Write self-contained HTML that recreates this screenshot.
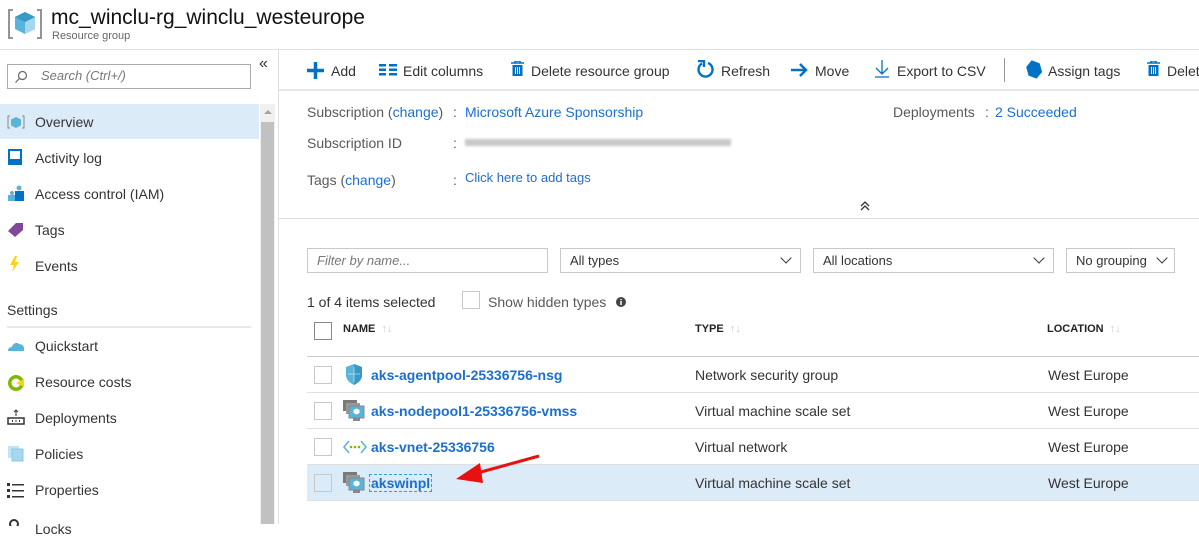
<!DOCTYPE html>
<html><head><meta charset="utf-8"><style>
*{margin:0;padding:0;box-sizing:border-box}
body{width:1199px;height:524px;overflow:hidden;background:#fff;font-family:"Liberation Sans",sans-serif;color:#333;position:relative;font-size:14px}
.a{position:absolute;white-space:nowrap}
.lnk{color:#1a6fd1}
.g{color:#595959}
.nav{position:absolute;left:35px;font-size:14px;color:#333}
.ic{position:absolute}
.tb{position:absolute;top:63px;font-size:14px;color:#333}
.sel{position:absolute;height:25px;border:1px solid #c8c8c8;font-size:13px;padding:4px 9px;color:#333}
.chev{position:absolute;right:10px;top:5px;width:8px;height:8px;border-right:1.5px solid #333;border-bottom:1.5px solid #333;transform:rotate(45deg)}
.cb{position:absolute;width:18px;height:18px;border:1px solid #c8c8c8;background:#fff}
.hl{position:absolute;height:1px;background:#e0e0e0}
.rn{position:absolute;left:371px;font-size:14px;font-weight:bold;color:#1a6fd1}
.rt{position:absolute;left:695px;font-size:14px}
.rl{position:absolute;left:1048px;font-size:14px}
</style></head><body>
<svg class="ic" style="left:7px;top:8px" width="36" height="32" viewBox="0 0 36 32"><path d="M6 2H2v28h4M30 2h4v28h-4" fill="none" stroke="#888" stroke-width="1.8"/><path d="M18 4l10 5v12l-10 5-10-5V9z" fill="#59b4d9"/><path d="M18 14l10-5v12l-10 5z" fill="#a5d8ef"/><path d="M8 9l10-5 10 5-10 5z" fill="#3999c6"/></svg>
<div class="a" style="left:51px;top:6px;font-size:21px;color:#111">mc_winclu-rg_winclu_westeurope</div>
<div class="a" style="left:52px;top:30px;font-size:11px;color:#666">Resource group</div>
<div class="hl" style="left:0;top:49px;width:1199px;background:#e0e0e0"></div>
<div class="a" style="left:7px;top:64px;width:244px;height:25px;border:1px solid #aaa"></div>
<svg class="ic" style="left:14px;top:70px" width="14" height="14"><circle cx="8.5" cy="5.5" r="4" fill="none" stroke="#666" stroke-width="1.2"/><path d="M5.5 8.5L1.5 12.5" stroke="#666" stroke-width="1.2"/></svg>
<div class="a" style="left:41px;top:68px;font-size:13px;font-style:italic;color:#777">Search (Ctrl+/)</div>
<div class="a" style="left:259px;top:55px;font-size:16px;color:#333">«</div>
<div class="a" style="left:0;top:104px;width:259px;height:35px;background:#dcebf8"></div>
<div class="a" style="left:260px;top:104px;width:15px;height:420px;background:#f0f0f0"></div>
<div class="a" style="left:261px;top:122px;width:13px;height:402px;background:#c1c1c1"></div>
<div class="a" style="left:264px;top:110px;width:0;height:0;border-left:4px solid transparent;border-right:4px solid transparent;border-bottom:4px solid #a3a3a3"></div>
<div class="a" style="left:278px;top:50px;width:1px;height:474px;background:#e0e0e0"></div>
<svg class="ic" style="left:7px;top:114px" width="18" height="16"><path d="M3 2H1v12h2M15 2h2v12h-2" fill="none" stroke="#888"/><path d="M9 3l5 2.5v6L9 14 4 11.5v-6z" fill="#59b4d9"/></svg>
<div class="nav" style="top:114px">Overview</div>
<svg class="ic" style="left:8px;top:149px" width="14" height="16"><rect x="0" y="0" width="14" height="16" fill="#0072c6"/><rect x="2" y="2" width="10" height="8" fill="#fff"/></svg>
<div class="nav" style="top:150px">Activity log</div>
<svg class="ic" style="left:7px;top:185px" width="18" height="16"><circle cx="12" cy="3" r="2.5" fill="#59b4d9"/><rect x="8" y="6" width="9" height="10" fill="#0072c6"/><circle cx="5" cy="8" r="2" fill="#59b4d9"/><rect x="1" y="10" width="7" height="6" fill="#59b4d9"/></svg>
<div class="nav" style="top:186px">Access control (IAM)</div>
<svg class="ic" style="left:7px;top:221px" width="18" height="16"><path d="M1 10L9 2h7v7l-8 7z" fill="#804998"/></svg>
<div class="nav" style="top:222px">Tags</div>
<svg class="ic" style="left:9px;top:256px" width="12" height="16"><path d="M6 0L1 9h4l-2 7 7-10H6l2-6z" fill="#fcd116"/></svg>
<div class="nav" style="top:258px">Events</div>
<div class="a" style="left:7px;top:302px;font-size:14px;color:#333">Settings</div>
<div class="a" style="left:7px;top:326px;width:244px;height:2px;background:#e8e8e8"></div>
<svg class="ic" style="left:7px;top:340px" width="18" height="12"><path d="M1 11c0-3 2-4 4-4 1-4 5-5 7-3 3 0 5 2 5 4v3z" fill="#59b4d9"/></svg>
<div class="nav" style="top:338px">Quickstart</div>
<svg class="ic" style="left:7px;top:374px" width="18" height="18"><circle cx="9" cy="9" r="8" fill="#7fba00"/><circle cx="9" cy="9" r="4.5" fill="#fff"/><path d="M9 9L17 5v8z" fill="#fcd116"/></svg>
<div class="nav" style="top:374px">Resource costs</div>
<svg class="ic" style="left:7px;top:409px" width="18" height="16"><path d="M9 1v6M7 3l2-2 2 2" stroke="#333" fill="none"/><rect x="1" y="9" width="16" height="6" fill="none" stroke="#333" stroke-width="1.5"/><path d="M5 12h1M8.5 12h1M12 12h1" stroke="#333" stroke-width="2"/></svg>
<div class="nav" style="top:410px">Deployments</div>
<svg class="ic" style="left:7px;top:445px" width="18" height="17"><rect x="1" y="1" width="11" height="12" fill="#c3e3f4"/><rect x="5" y="4" width="11" height="12" fill="#a5d8ef" stroke="#8cc7e6"/></svg>
<div class="nav" style="top:446px">Policies</div>
<svg class="ic" style="left:7px;top:482px" width="18" height="16"><g fill="#333"><rect x="0" y="1" width="3" height="3"/><rect x="0" y="7" width="3" height="3"/><rect x="0" y="13" width="3" height="3"/><rect x="5" y="2" width="12" height="1.5"/><rect x="5" y="8" width="12" height="1.5"/><rect x="5" y="14" width="12" height="1.5"/></g></svg>
<div class="nav" style="top:482px">Properties</div>
<svg class="ic" style="left:8px;top:518px" width="14" height="8"><circle cx="6" cy="6" r="4" fill="none" stroke="#333" stroke-width="2"/></svg>
<div class="nav" style="top:521px">Locks</div>
<svg class="ic" style="left:306px;top:61px" width="19" height="19"><path d="M9.5 1v17M1 9.5h17" stroke="#0072c6" stroke-width="3.5"/></svg>
<div class="tb" style="left:331px">Add</div>
<svg class="ic" style="left:379px;top:64px" width="18" height="12"><g fill="#0072c6"><rect x="0" y="0" width="7" height="2.5"/><rect x="0" y="4.5" width="7" height="2.5"/><rect x="0" y="9" width="7" height="2.5"/><rect x="10" y="0" width="8" height="2.5"/><rect x="10" y="4.5" width="8" height="2.5"/><rect x="10" y="9" width="8" height="2.5"/></g></svg>
<div class="tb" style="left:403px">Edit columns</div>
<svg class="ic" style="left:511px;top:61px" width="13" height="16"><path d="M0 2h13M4 2V0h5v2" stroke="#0072c6" stroke-width="1.6" fill="none"/><rect x="1.5" y="4" width="10" height="11" fill="#0072c6"/><path d="M4.5 6v7M6.5 6v7M8.5 6v7" stroke="#fff"/></svg>
<div class="tb" style="left:531px">Delete resource group</div>
<svg class="ic" style="left:696px;top:60px" width="19" height="19"><path d="M6 3.5A7 7 0 1 0 12 3" fill="none" stroke="#0072c6" stroke-width="2.4"/><path d="M2 1h6v6" fill="none" stroke="#0072c6" stroke-width="2.4"/></svg>
<div class="tb" style="left:721px">Refresh</div>
<svg class="ic" style="left:791px;top:62px" width="18" height="16"><path d="M0 8h15M9 2l6 6-6 6" stroke="#0072c6" stroke-width="2.5" fill="none"/></svg>
<div class="tb" style="left:815px">Move</div>
<svg class="ic" style="left:875px;top:60px" width="14" height="18"><path d="M7 0v14M1 8l6 6 6-6M0 17h14" stroke="#0072c6" stroke-width="1.3" fill="none"/></svg>
<div class="tb" style="left:897px">Export to CSV</div>
<div class="a" style="left:1004px;top:58px;width:1px;height:24px;background:#999"></div>
<svg class="ic" style="left:1026px;top:60px" width="16" height="19"><path d="M8 0l7 5v9l-7 5-7-5V5z" fill="#0072c6" transform="rotate(-15 8 9)"/></svg>
<div class="tb" style="left:1048px">Assign tags</div>
<svg class="ic" style="left:1147px;top:61px" width="13" height="16"><path d="M0 2h13M4 2V0h5v2" stroke="#0072c6" stroke-width="1.6" fill="none"/><rect x="1.5" y="4" width="10" height="11" fill="#0072c6"/><path d="M4.5 6v7M6.5 6v7M8.5 6v7" stroke="#fff"/></svg>
<div class="tb" style="left:1167px">Delete</div>
<div class="a" style="left:279px;top:89px;width:920px;height:2px;background:#e6e6e6"></div>
<div class="a g" style="left:307px;top:104px">Subscription (<span class="lnk">change</span>)</div>
<div class="a g" style="left:453px;top:104px">:</div>
<div class="a lnk" style="left:465px;top:104px">Microsoft Azure Sponsorship</div>
<div class="a g" style="left:307px;top:135px">Subscription ID</div>
<div class="a g" style="left:453px;top:135px">:</div>
<div class="a" style="left:465px;top:139px;width:266px;height:7px;background:#c8c8c8;filter:blur(1.2px)"></div>
<div class="a g" style="left:307px;top:172px">Tags (<span class="lnk">change</span>)</div>
<div class="a g" style="left:453px;top:172px">:</div>
<div class="a lnk" style="left:465px;top:170px;font-size:13px">Click here to add tags</div>
<div class="a g" style="left:893px;top:104px">Deployments</div>
<div class="a g" style="left:985px;top:104px">:</div>
<div class="a lnk" style="left:995px;top:104px">2 Succeeded</div>
<svg class="ic" style="left:860px;top:201px" width="10" height="10"><path d="M1 5l4-4 4 4M1 9l4-4 4 4" stroke="#333" stroke-width="1.3" fill="none"/></svg>
<div class="a" style="left:279px;top:218px;width:920px;height:1px;background:#ddd"></div>
<div class="sel" style="left:307px;top:248px;width:241px;font-style:italic;color:#777">Filter by name...</div>
<div class="sel" style="left:560px;top:248px;width:241px">All types<span class="chev"></span></div>
<div class="sel" style="left:813px;top:248px;width:241px">All locations<span class="chev"></span></div>
<div class="sel" style="left:1066px;top:248px;width:109px">No grouping<span class="chev" style="right:8px"></span></div>
<div class="a" style="left:307px;top:294px;font-size:14px">1 of 4 items selected</div>
<div class="cb" style="left:462px;top:291px"></div>
<div class="a g" style="left:488px;top:294px">Show hidden types</div>
<svg class="ic" style="left:616px;top:297px" width="10" height="10"><circle cx="5" cy="5" r="5" fill="#444"/><path d="M5 4v4" stroke="#fff" stroke-width="1.5"/><circle cx="5" cy="2.5" r=".8" fill="#fff"/></svg>
<div class="cb" style="left:314px;top:322px;border-color:#888"></div>
<div class="a" style="left:343px;top:323px;font-size:11px;font-weight:bold;color:#222">NAME <span style="color:#ccc;font-weight:normal">&nbsp;↑↓</span></div>
<div class="a" style="left:695px;top:323px;font-size:11px;font-weight:bold;color:#222">TYPE <span style="color:#ccc;font-weight:normal">&nbsp;↑↓</span></div>
<div class="a" style="left:1047px;top:323px;font-size:11px;font-weight:bold;color:#222">LOCATION <span style="color:#ccc;font-weight:normal">&nbsp;↑↓</span></div>
<div class="hl" style="left:307px;top:356px;width:892px;background:#ccc"></div>
<div class="a" style="left:307px;top:465px;width:892px;height:35px;background:#dcebf8"></div>
<div class="hl" style="left:307px;top:392px;width:892px"></div>
<div class="hl" style="left:307px;top:428px;width:892px"></div>
<div class="hl" style="left:307px;top:464px;width:892px"></div>
<div class="hl" style="left:307px;top:500px;width:892px"></div>
<div class="cb" style="left:314px;top:366px"></div>
<div class="cb" style="left:314px;top:402px"></div>
<div class="cb" style="left:314px;top:438px"></div>
<div class="cb" style="left:314px;top:474px;background:transparent"></div>
<svg class="ic" style="left:345px;top:364px" width="18" height="22"><path d="M9 0l8 3v8c0 5-4 8-8 10-4-2-8-5-8-10V3z" fill="#59b4d9"/><path d="M9 0l8 3v8c0 5-4 8-8 10z" fill="#3999c6"/><path d="M9 3v15M3 10h12" stroke="#fff" stroke-opacity=".5"/></svg>
<div class="rn" style="top:367px">aks-agentpool-25336756-nsg</div>
<svg class="ic" style="left:342px;top:399px" width="24" height="24"><rect x="1" y="1" width="14" height="11" fill="#7a7a7a"/><rect x="4" y="4" width="14" height="11" fill="#999"/><rect x="7" y="7" width="15" height="12" fill="#59b4d9" stroke="#888"/><path d="M14.5 9.5l3 1.5v3l-3 1.5-3-1.5v-3z" fill="#fff"/><rect x="11" y="19" width="7" height="3" fill="#888"/></svg>
<div class="rn" style="top:403px">aks-nodepool1-25336756-vmss</div>
<svg class="ic" style="left:343px;top:440px" width="24" height="14"><path d="M6 1L1 7l5 6M18 1l5 6-5 6" stroke="#59b4d9" stroke-width="1.5" fill="none"/><circle cx="8" cy="7" r="1.3" fill="#7fba00"/><circle cx="12" cy="7" r="1.3" fill="#7fba00"/><circle cx="16" cy="7" r="1.3" fill="#7fba00"/></svg>
<div class="rn" style="top:439px">aks-vnet-25336756</div>
<svg class="ic" style="left:342px;top:471px" width="24" height="24"><rect x="1" y="1" width="14" height="11" fill="#7a7a7a"/><rect x="4" y="4" width="14" height="11" fill="#999"/><rect x="7" y="7" width="15" height="12" fill="#59b4d9" stroke="#888"/><path d="M14.5 9.5l3 1.5v3l-3 1.5-3-1.5v-3z" fill="#fff"/><rect x="11" y="19" width="7" height="3" fill="#888"/></svg>
<div class="rn" style="top:475px;left:370px;outline:1px dashed #29a3e0;padding:0 1px">akswinpl</div>
<div class="rt" style="top:367px">Network security group</div>
<div class="rt" style="top:403px">Virtual machine scale set</div>
<div class="rt" style="top:439px">Virtual network</div>
<div class="rt" style="top:475px">Virtual machine scale set</div>
<div class="rl" style="top:367px">West Europe</div>
<div class="rl" style="top:403px">West Europe</div>
<div class="rl" style="top:439px">West Europe</div>
<div class="rl" style="top:475px">West Europe</div>
<svg class="ic" style="left:450px;top:450px" width="95" height="35"><path d="M89 6L20 25" stroke="#e81010" stroke-width="3"/><path d="M6 29l24-16 3 20z" fill="#e81010"/></svg>
</body></html>
